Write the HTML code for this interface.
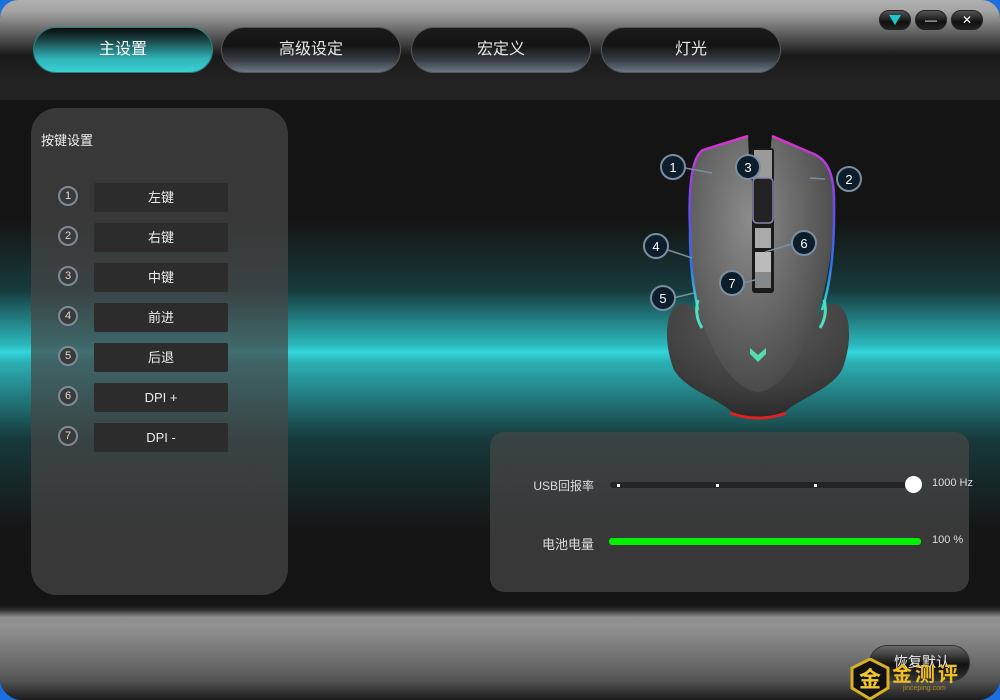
<!DOCTYPE html>
<html><head><meta charset="utf-8">
<style>
*{margin:0;padding:0;box-sizing:border-box}
html,body{width:1000px;height:700px;overflow:hidden;background:#1a70e0;font-family:"Liberation Sans","Noto Sans CJK SC",sans-serif}
#win{position:absolute;left:0;top:0;width:1000px;height:700px;border-radius:18px 18px 22px 22px;overflow:hidden;background:#141414}
#head{position:absolute;left:0;top:0;width:1000px;height:100px;background:linear-gradient(#b0b0b0 0px,#a6a6a6 10px,#6a6a6a 30px,#1a1a1a 55px,#1e1e1e 70px,#222 80px,#222 100px)}
.tab{position:absolute;top:27px;width:180px;height:46px;border-radius:23px;border:1px solid #555;background:linear-gradient(#1a1a1a 0%,#141414 40%,#3a4048 75%,#6b7786 100%);color:#e6e6e6;font-size:16px;text-align:center;line-height:44px}
.tab.on{border-color:#2a7e80;background:linear-gradient(#0a0a0a 0%,#1c4a4c 30%,#2fb4b8 70%,#3ad2d6 100%);color:#fff}
.ctl{position:absolute;top:10px;width:32px;height:20px;border-radius:10px;background:linear-gradient(#555,#111 60%,#222);border:1px solid #222;color:#fff;font-size:12px;text-align:center;line-height:18px}
#main{position:absolute;left:0;top:100px;width:1000px;height:505px;background:linear-gradient(#141414 0px,#141414 120px,#173a3c 190px,#2bb8bd 245px,#33d6dc 252px,#2bb0b5 262px,#17383a 340px,#151515 430px,#141414 505px)}
#left{position:absolute;left:31px;top:108px;width:257px;height:487px;border-radius:26px;background:rgba(71,71,71,0.72)}
#left h3{position:absolute;left:10px;top:22px;font-size:13px;font-weight:normal;color:#eee}
.num{position:absolute;left:27px;width:20px;height:20px;border-radius:50%;border:2px solid #7e8a98;background:#3a3a3a;color:#ddd;font-size:11px;text-align:center;line-height:16px}
.btn{position:absolute;left:63px;width:134px;height:29px;background:#2c2c2c;border-radius:2px;color:#eee;font-size:13px;text-align:center;line-height:29px}
#right{position:absolute;left:490px;top:432px;width:479px;height:160px;border-radius:14px;background:rgba(71,71,71,0.72)}
.lbl{position:absolute;color:#ddd;font-size:12px;white-space:nowrap}
#bottom{position:absolute;left:0;top:605px;width:1000px;height:95px;background:linear-gradient(#141414 0px,#2e2e2e 5px,#8a8a8a 12px,#929292 20px,#7a7a7a 45px,#555 75px,#1c1c1c 95px)}
.call{fill:#0c1e2c;stroke:#7b8ea0;stroke-width:2}
.ct{fill:#fff;font-size:13px;font-family:"Liberation Sans",sans-serif;text-anchor:middle}
</style></head><body>
<div id="win">
<div id="head">
 <div class="tab on" style="left:33px">主设置</div>
 <div class="tab" style="left:221px">高级设定</div>
 <div class="tab" style="left:411px">宏定义</div>
 <div class="tab" style="left:601px">灯光</div>
 <div class="ctl" style="left:879px"><svg width="14" height="12" style="margin-top:3px"><path d="M1 1H13L7 11Z" fill="#1ac8c8"/></svg></div>
 <div class="ctl" style="left:915px">—</div>
 <div class="ctl" style="left:951px">✕</div>
</div>
<div id="main"></div>
<div id="left">
 <h3>按键设置</h3>
 <div class="num" style="top:78px">1</div><div class="btn" style="top:75px">左键</div>
 <div class="num" style="top:118px">2</div><div class="btn" style="top:115px">右键</div>
 <div class="num" style="top:158px">3</div><div class="btn" style="top:155px">中键</div>
 <div class="num" style="top:198px">4</div><div class="btn" style="top:195px">前进</div>
 <div class="num" style="top:238px">5</div><div class="btn" style="top:235px">后退</div>
 <div class="num" style="top:278px">6</div><div class="btn" style="top:275px">DPI +</div>
 <div class="num" style="top:318px">7</div><div class="btn" style="top:315px">DPI -</div>
</div>
<svg style="position:absolute;left:630px;top:120px" width="240" height="310" viewBox="0 0 240 310">
 <defs>
  <linearGradient id="rim" x1="0" y1="0" x2="0" y2="1"><stop offset="0" stop-color="#e030d0"/><stop offset=".45" stop-color="#6050f0"/><stop offset=".75" stop-color="#3070f0"/><stop offset="1" stop-color="#40e0c0"/></linearGradient>
  <radialGradient id="body" cx=".42" cy=".3" r=".75"><stop offset="0" stop-color="#8c8c8c"/><stop offset=".55" stop-color="#606060"/><stop offset="1" stop-color="#3c3c3c"/></radialGradient>
  <radialGradient id="grip" cx=".5" cy=".15" r=".85"><stop offset="0" stop-color="#5e5e5e"/><stop offset=".7" stop-color="#3e3e3e"/><stop offset="1" stop-color="#2a2a2a"/></radialGradient>
 </defs>
 <path d="M118 16 L73 30 C63 36 58 60 60 110 C60 150 64 180 72 205 C90 260 112 292 128 296 C144 292 166 260 184 205 C194 175 205 130 204 80 C204 50 195 40 186 35 L142 16 C140 30 140 60 140 60 L120 60 Z" fill="url(#body)"/>
 <path d="M48 185 C60 180 68 190 76 212 C90 250 110 270 128 272 C146 270 166 250 180 212 C188 190 196 180 208 185 C222 192 222 225 212 250 C200 270 170 278 155 292 C145 300 112 300 102 292 C87 278 56 270 44 250 C34 225 34 192 48 185 Z" fill="url(#grip)"/>
 <path d="M118 16 L73 30 C63 36 58 60 60 110 C60 150 64 170 68 190" stroke="url(#rim)" stroke-width="2.5" fill="none"/>
 <path d="M142 16 L186 35 C195 40 204 50 204 80 C205 130 200 165 192 190" stroke="url(#rim)" stroke-width="2.5" fill="none"/>
 <path d="M100 293 Q128 303 156 293" stroke="#e02020" stroke-width="3" fill="none"/>
 <rect x="122" y="28" width="22" height="145" rx="3" fill="#1a1a1a"/>
 <rect x="124" y="30" width="18" height="28" fill="#9a9a9a"/>
 <rect x="123" y="58" width="20" height="45" rx="4" fill="#222" stroke="#8888aa" stroke-width="1.5"/>
 <rect x="125" y="108" width="16" height="20" fill="#aaa"/><rect x="125" y="132" width="16" height="20" fill="#bbb"/><rect x="125" y="152" width="16" height="16" fill="#888"/>
 <path d="M120 228 L128 235 L136 228 L136 234 L128 242 L120 234 Z" fill="#50e0b0"/>
 <path d="M68 180 Q64 195 72 208" stroke="#50e0c0" stroke-width="3" fill="none"/>
 <path d="M194 180 Q198 195 190 208" stroke="#50e0c0" stroke-width="3" fill="none"/>
 <line x1="55" y1="48" x2="82" y2="53" stroke="#7b8ea0" stroke-width="1.5"/>
 <line x1="195" y1="59" x2="180" y2="58" stroke="#7b8ea0" stroke-width="1.5"/>
 <line x1="38" y1="130" x2="62" y2="138" stroke="#7b8ea0" stroke-width="1.5"/>
 <line x1="43" y1="178" x2="64" y2="173" stroke="#7b8ea0" stroke-width="1.5"/>
 <line x1="162" y1="124" x2="135" y2="132" stroke="#7b8ea0" stroke-width="1.5"/>
 <line x1="113" y1="163" x2="133" y2="158" stroke="#7b8ea0" stroke-width="1.5"/>
 <circle class="call" cx="43" cy="47" r="12"/><text class="ct" x="43" y="52">1</text>
 <circle class="call" cx="219" cy="59" r="12"/><text class="ct" x="219" y="64">2</text>
 <circle class="call" cx="118" cy="47" r="12"/><text class="ct" x="118" y="52">3</text>
 <circle class="call" cx="26" cy="126" r="12"/><text class="ct" x="26" y="131">4</text>
 <circle class="call" cx="33" cy="178" r="12"/><text class="ct" x="33" y="183">5</text>
 <circle class="call" cx="174" cy="123" r="12"/><text class="ct" x="174" y="128">6</text>
 <circle class="call" cx="102" cy="163" r="12"/><text class="ct" x="102" y="168">7</text>
</svg>
<div id="right">
 <div class="lbl" style="right:375px;top:45px">USB回报率</div>
 <div style="position:absolute;left:120px;top:50px;width:312px;height:6px;border-radius:3px;background:#242424"></div>
 <div style="position:absolute;left:127px;top:52px;width:3px;height:3px;background:#fff"></div>
 <div style="position:absolute;left:226px;top:52px;width:3px;height:3px;background:#fff"></div>
 <div style="position:absolute;left:324px;top:52px;width:3px;height:3px;background:#fff"></div>
 <div style="position:absolute;left:415px;top:44px;width:17px;height:17px;border-radius:50%;background:#fff"></div>
 <div class="lbl" style="left:442px;top:45px;font-size:11px">1000 Hz</div>
 <div class="lbl" style="right:375px;top:102px;font-size:13px">电池电量</div>
 <div style="position:absolute;left:119px;top:106px;width:312px;height:7px;border-radius:3px;background:#00f000"></div>
 <div class="lbl" style="left:442px;top:102px;font-size:11px">100 %</div>
</div>
<div id="bottom">
 <div style="position:absolute;left:869px;top:40px;width:101px;height:36px;border-radius:18px;border:1px solid #333;background:linear-gradient(#6a6a6a,#111 55%,#333);color:#eee;font-size:14px;line-height:32px;text-indent:24px">恢复默认</div>
 <svg style="position:absolute;left:850px;top:53px" width="40" height="42"><path d="M20 1 L38 10 L38 30 L20 41 L2 30 L2 10 Z" fill="#111" stroke="#d8b020" stroke-width="3"/><text x="20" y="29" fill="#f0c830" font-size="22" font-weight="bold" text-anchor="middle" font-family="Noto Sans CJK SC,sans-serif">金</text></svg>
 <div style="position:absolute;left:892px;top:57px;color:#f0c020;font-size:20px;font-weight:bold;letter-spacing:3px;font-family:'Noto Sans CJK SC',sans-serif;line-height:22px">金测评</div>
 <div style="position:absolute;left:903px;top:80px;color:#b09020;font-size:7px">jinceping.com</div>
</div>
</div>
</body></html>
